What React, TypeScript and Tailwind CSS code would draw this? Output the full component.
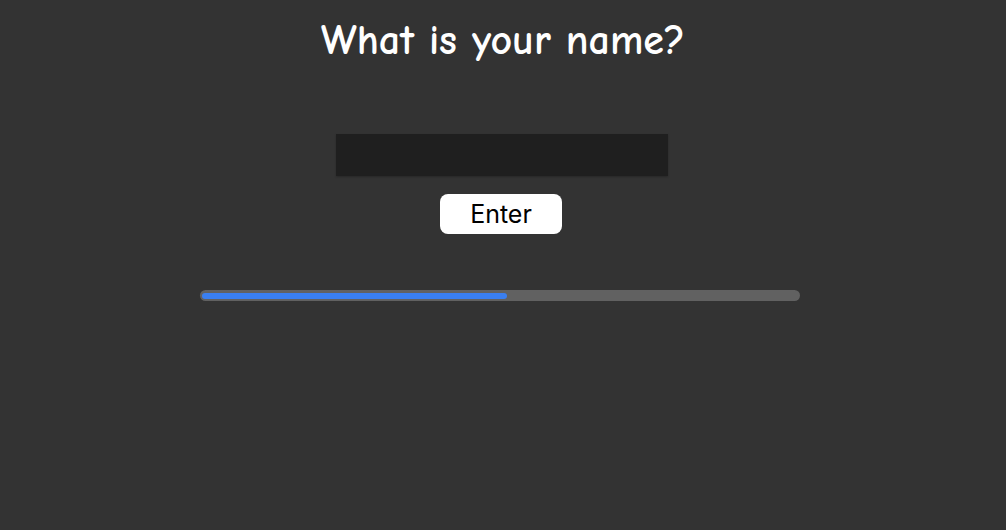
import { useState } from "react";

export default function App() {
  const [name, setName] = useState("");
  const progress = 51;

  return (
    <div className="w-full h-[530px] bg-[#333333] flex flex-col items-center overflow-hidden">
      {/* Title */}
      <h1 className="mt-[17px] text-white text-[42px] leading-[48px] font-bold font-['Comic_Sans_MS','Comic_Neue','Noto_Sans',sans-serif]">
        What is your name?
      </h1>

      {/* Name input */}
      <input
        type="text"
        value={name}
        onChange={(e) => setName(e.target.value)}
        className="mt-[69px] mr-[2px] w-[332px] h-[42px] bg-[#1f1f1f] text-white px-3 outline-none shadow-[0_1px_2px_rgba(0,0,0,0.25)] font-['Noto_Sans',sans-serif]"
      />

      {/* Enter button */}
      <button className="mt-[18px] mr-[4px] w-[122px] h-[40px] bg-white rounded-[8px] text-black text-[25px] leading-none font-['Inter','Noto_Sans',sans-serif]">
        Enter
      </button>

      {/* Progress */}
      <div className="mt-[56px] mr-[6px] w-[600px] h-[11px] bg-[#616161] rounded-full pt-[3px] pl-[2px]">
        <div className="h-[6px] bg-[#3a7ff0] rounded-full" style={{ width: `${progress}%` }} />
      </div>
    </div>
  );
}
